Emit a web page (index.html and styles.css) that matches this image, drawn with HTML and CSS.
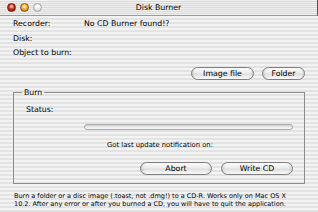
FILE: index.html
```html
<!DOCTYPE html>
<html>
<head>
<meta charset="utf-8">
<title>Disk Burner</title>
<link rel="stylesheet" href="styles.css">
</head>
<body>
<div class="window">
  <div class="titlebar">
    <div class="lights">
      <span class="light light-close"></span>
      <span class="light light-min"></span>
      <span class="light light-zoom"></span>
    </div>
    <div class="title">Disk Burner</div>
    <div class="title-spacer"></div>
  </div>
  <div class="content">
    <div class="info">
      <div class="row"><span class="label">Recorder:</span><span class="value">No CD Burner found!?</span></div>
      <div class="row"><span class="label">Disk:</span><span class="value"></span></div>
      <div class="row"><span class="label">Object to burn:</span><span class="value"></span></div>
    </div>
    <div class="source-buttons">
      <button class="btn btn-image">Image file</button>
      <button class="btn btn-folder">Folder</button>
    </div>
    <fieldset class="group">
      <legend class="group-title">Burn</legend>
      <div class="group-body">
        <div class="status-row">Status:</div>
        <div class="progress"></div>
        <div class="notice">Got last update notification on:</div>
        <div class="burn-buttons">
          <button class="btn btn-burn">Abort</button>
          <button class="btn btn-burn">Write CD</button>
        </div>
      </div>
    </fieldset>
    <p class="footer">Burn a folder or a disc image (.toast, not .dmg!) to a CD-R. Works only on Mac OS X<br>10.2. After any error or after you burned a CD, you will have to quit the application.</p>
  </div>
</div>
</body>
</html>
```

FILE: styles.css
```css
html, body {
  margin: 0;
  padding: 0;
}

body {
  width: 318px;
  height: 212px;
  overflow: hidden;
  font-family: "DejaVu Sans", "Liberation Sans", sans-serif;
  font-size: 7.8px;
  color: #111;
  background: #ececec;
}

.window {
  width: 318px;
  height: 212px;
  background: repeating-linear-gradient(to bottom, #f3f3f3 0 2px, #e3e3e3 2px 4px);
}

.titlebar {
  height: 15px;
  border-bottom: 1px solid #9a9a9a;
  border-right: 1px solid #555;
  display: grid;
  grid-template-columns: 1fr auto 1fr;
  align-items: center;
  background: repeating-linear-gradient(to bottom, #f1f1f1 0 1px, #d9d9d9 1px 2px);
}

.lights {
  display: flex;
  gap: 4px;
  padding-left: 6.5px;
}

.light {
  width: 9px;
  height: 9px;
  border-radius: 50%;
  box-sizing: border-box;
}

.light-close {
  background: radial-gradient(circle at 50% 35%, #ffd0c0 0 12%, #e8492e 35%, #b3190c 70%, #7c1208 100%);
  border: 1px solid #6e1a10;
}

.light-min {
  background: radial-gradient(circle at 50% 35%, #fff3c4 0 12%, #f5b93a 40%, #d98a12 70%, #9a5a08 100%);
  border: 1px solid #8a5a10;
}

.light-zoom {
  background: radial-gradient(circle at 50% 35%, #ffffff 0 20%, #e2e2e2 60%, #c4c4c4 100%);
  border: 1px solid #a8a8a8;
}

.title {
  font-size: 7.8px;
  color: #000;
  line-height: 15px;
}

.content {
  padding: 1px 13px 0;
}

.row {
  display: grid;
  grid-template-columns: 71px 1fr;
  height: 14.5px;
  line-height: 14.5px;
  color: #000;
}

.source-buttons {
  display: flex;
  justify-content: flex-end;
  gap: 8px;
  margin-top: 6px;
}

.btn {
  height: 13px;
  padding: 0;
  margin: 0;
  border: 1px solid #7f7f7f;
  border-radius: 7px;
  font-family: inherit;
  font-size: 7.8px;
  color: #000;
  line-height: 11px;
  background: linear-gradient(to bottom, #fdfdfd 0%, #ececec 45%, #dedede 55%, #f2f2f2 85%, #fcfcfc 100%);
  box-shadow: inset 2px 0 2px -1px rgba(0,0,0,0.15), inset -2px 0 2px -1px rgba(0,0,0,0.1);
}

.btn-image { width: 63px; }
.btn-folder { width: 43px; }
.btn-burn { width: 72px; }

.group {
  margin: 8px 0 0;
  padding: 0;
  border: 1px solid #8c8c8c;
  min-width: 0;
}

.group-title {
  margin-left: 8px;
  padding: 0 2px;
  line-height: 10px;
  color: #000;
}

.group-body {
  padding: 7px 11px 8px 12px;
}

.status-row {
  line-height: 10px;
  color: #000;
}

.progress {
  margin: 9px 0 0 58px;
  height: 6px;
  box-sizing: border-box;
  border: 1px solid #ababab;
  border-radius: 3px;
  background: linear-gradient(to bottom, #cfcfcf, #eeeeee 60%, #f8f8f8);
}

.notice {
  margin-top: 10px;
  line-height: 10px;
  font-size: 6.8px;
  text-align: center;
  padding-left: 1px;
  color: #000;
}

.burn-buttons {
  display: flex;
  justify-content: flex-end;
  gap: 9px;
  margin-top: 12px;
}

.footer {
  margin: 8px 0 0;
  padding-left: 1px;
  font-size: 6.5px;
  line-height: 8px;
  color: #000;
  white-space: nowrap;
}
```
